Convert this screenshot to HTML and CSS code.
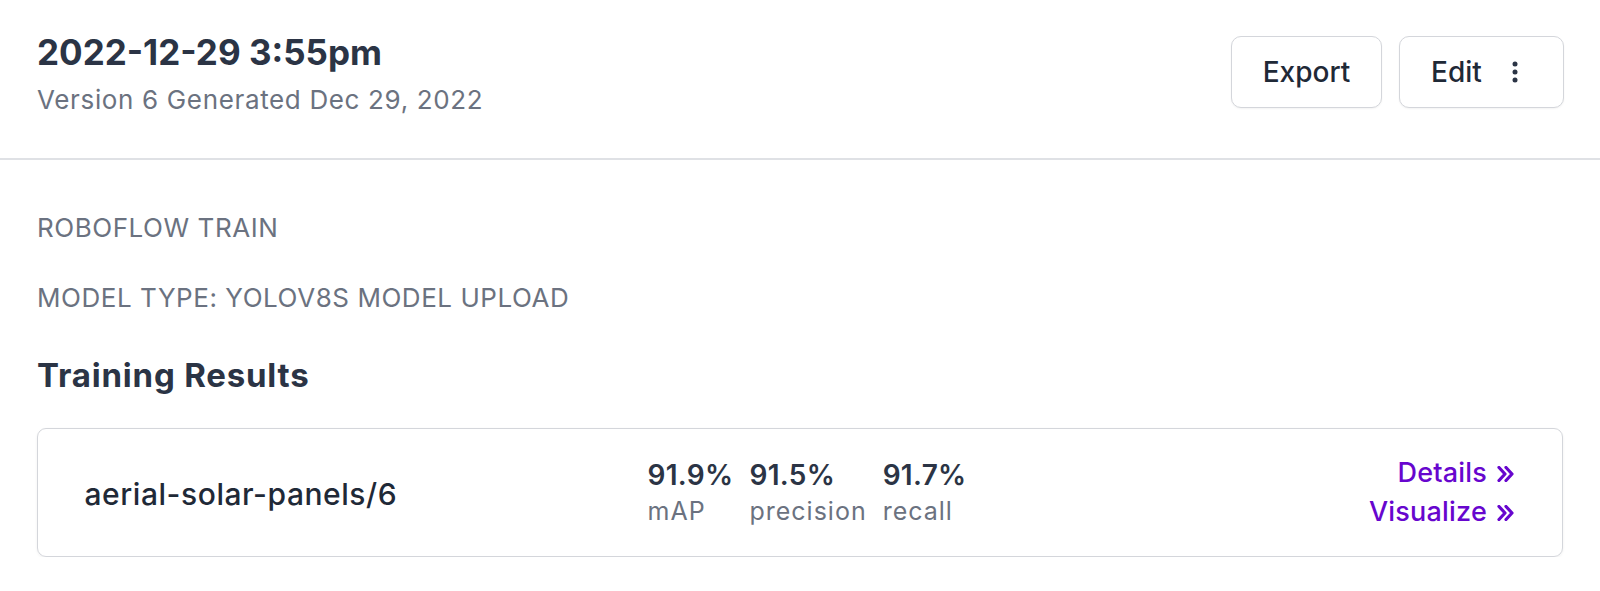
FILE: index.html
```html
<!DOCTYPE html>
<html>
<head>
<meta charset="utf-8">
<link rel="stylesheet" href="styles.css">
</head>
<body>
<header class="header">
  <div class="header-text">
    <h1 class="title">2022-12-29 3:55pm</h1>
    <div class="subtitle">Version 6 Generated Dec 29, 2022</div>
  </div>
  <div class="actions">
    <button class="btn btn-export">Export</button>
    <button class="btn btn-edit"><span>Edit</span>
      <svg class="dots" width="6" height="22" viewBox="0 0 6 22"><circle cx="3" cy="3" r="2.5"/><circle cx="3" cy="11" r="2.5"/><circle cx="3" cy="19" r="2.5"/></svg>
    </button>
  </div>
</header>
<main class="content">
  <div class="meta">ROBOFLOW TRAIN</div>
  <div class="meta meta-2">MODEL TYPE: YOLOV8S MODEL UPLOAD</div>
  <h2 class="section-title">Training Results</h2>
  <div class="card">
    <div class="model-name">aerial-solar-panels/6</div>
    <div class="stats">
      <div class="stat"><div class="stat-val">91.9%</div><div class="stat-label">mAP</div></div>
      <div class="stat"><div class="stat-val">91.5%</div><div class="stat-label">precision</div></div>
      <div class="stat"><div class="stat-val">91.7%</div><div class="stat-label">recall</div></div>
    </div>
    <div class="links">
      <a class="link">Details <svg class="chev" width="17" height="16" viewBox="0 0 17 16"><path d="M2 1.5 L8 8 L2 14.5 M9 1.5 L15 8 L9 14.5"/></svg></a>
      <a class="link">Visualize <svg class="chev" width="17" height="16" viewBox="0 0 17 16"><path d="M2 1.5 L8 8 L2 14.5 M9 1.5 L15 8 L9 14.5"/></svg></a>
    </div>
  </div>
</main>
</body>
</html>
```
FILE: styles.css
```css
* { box-sizing: border-box; }
html, body { margin: 0; padding: 0; background: #fff; }
body {
  font-family: Inter, "Noto Sans", sans-serif;
  color: #2d3748;
  width: 1600px;
}
.header {
  display: flex;
  justify-content: space-between;
  align-items: flex-start;
  padding: 31px 36px 0 37px;
  height: 160px;
  border-bottom: 2px solid #dfe1e5;
}
.title {
  margin: 0;
  font-size: 35px;
  font-weight: 700;
  line-height: 42px;
  color: #2b3445;
}
.subtitle {
  margin-top: 10px;
  font-size: 26px;
  line-height: 34px;
  letter-spacing: 0.65px;
  color: #6b7280;
}
.actions {
  display: flex;
  gap: 17px;
  margin-top: 5px;
}
.btn {
  height: 72px;
  border: 1.5px solid #d4d6db;
  border-radius: 10px;
  background: #fff;
  font-family: Inter, sans-serif;
  font-size: 28px;
  font-weight: 500;
  color: #1f2937;
  display: flex;
  align-items: center;
  box-shadow: 0 1px 2px rgba(0,0,0,0.05);
  padding: 0;
}
.btn-export { width: 151px; justify-content: center; }
.btn-edit { width: 165px; gap: 30px; padding-left: 31px; }
.dots { fill: #2b3445; }
.content {
  padding: 52px 37px 0 37px;
}
.meta {
  font-size: 26px;
  line-height: 32px;
  letter-spacing: 0.55px;
  color: #6b7280;
  text-transform: uppercase;
}
.meta-2 { margin-top: 38px; }
.section-title {
  margin: 41px 0 0 0;
  font-size: 33px;
  font-weight: 700;
  line-height: 40px;
  letter-spacing: 0.8px;
  color: #2b3445;
}
.card {
  margin-top: 33px;
  width: 1526px;
  height: 129px;
  border: 1.5px solid #d4d6db;
  border-radius: 9px;
  box-shadow: 0 1px 3px rgba(0,0,0,0.06);
  display: flex;
  align-items: center;
  padding: 0 48px 0 46.5px;
}
.model-name {
  width: 563px;
  flex-shrink: 0;
  font-size: 30px;
  font-weight: 500;
  line-height: 38px;
  letter-spacing: 0.55px;
  color: #1f2937;
  margin-top: 2px;
}
.stats {
  display: flex;
  gap: 16px;
  margin-top: 1px;
}
.stat-val {
  font-size: 28px;
  font-weight: 600;
  line-height: 38px;
  letter-spacing: 0.3px;
  color: #2b3445;
}
.stat-label {
  margin-top: -2px;
  font-size: 25px;
  line-height: 38px;
  letter-spacing: 1px;
  color: #6b7280;
}
.links {
  margin-left: auto;
  margin-bottom: 1px;
  display: flex;
  flex-direction: column;
  align-items: flex-end;
}
.link {
  display: flex;
  align-items: center;
  gap: 10px;
  font-size: 27px;
  font-weight: 500;
  line-height: 39px;
  letter-spacing: 0.2px;
  color: #6706ce;
}
.chev {
  fill: none;
  stroke: #6706ce;
  stroke-width: 3.2;
  stroke-linecap: round;
  stroke-linejoin: round;
  margin-top: 2px;
}
```
